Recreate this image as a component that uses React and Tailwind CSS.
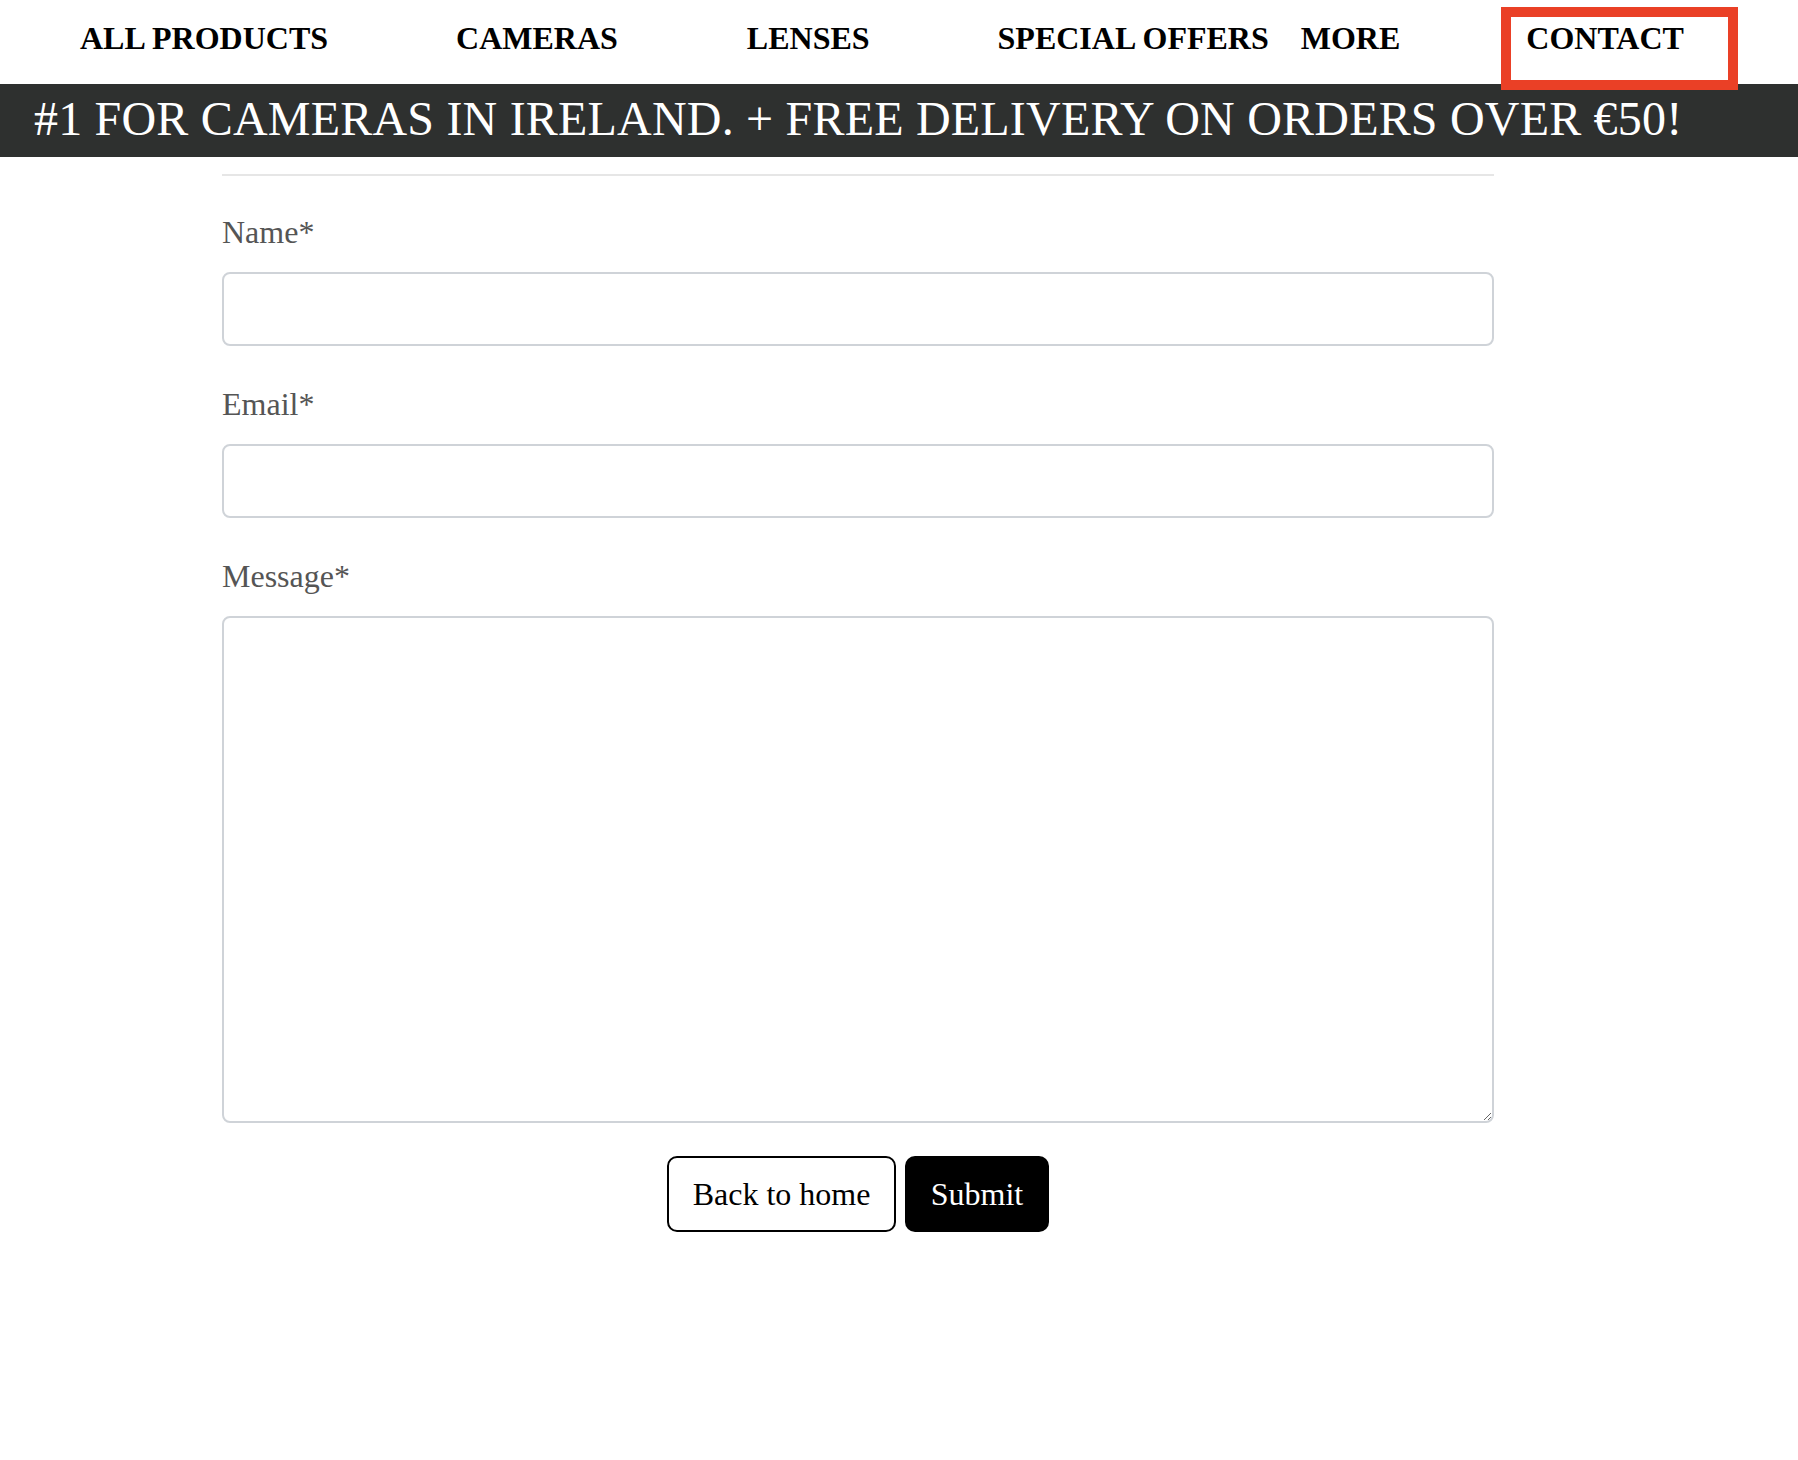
import React from 'react'

const navItems = [
  { label: 'ALL PRODUCTS', className: 'ml-[80px]' },
  { label: 'CAMERAS', className: 'ml-[128px]' },
  { label: 'LENSES', className: 'ml-[129px]' },
  { label: 'SPECIAL OFFERS', className: 'ml-[128px]' },
  { label: 'MORE', className: 'ml-[32px]' },
  { label: 'CONTACT', className: 'ml-[126px]' },
]

function Field({ label, children }) {
  return (
    <div className="flex flex-col">
      <label className="text-[32px] leading-[36px] text-[#555555] mb-[22px]">{label}</label>
      {children}
    </div>
  )
}

export default function App() {
  return (
    <div className="relative min-h-[1460px] bg-white font-['Liberation_Serif',serif]">
      {/* top nav */}
      <nav className="h-[84px] flex items-start pt-[20px]">
        {navItems.map((item) => (
          <a key={item.label} href="#" className={`${item.className} text-[32px] leading-[36px] font-bold text-black whitespace-nowrap`}>
            {item.label}
          </a>
        ))}
      </nav>
      {/* highlight box round the active link */}
      <div className="absolute left-[1501px] top-[7px] w-[237px] h-[83px] border-[10px] border-[#ea4026] z-10" />

      <div className="h-[73px] bg-[#2e302f] text-white text-[48px] leading-[53px] pt-[8px] pl-[34px] tracking-[0.2px] whitespace-nowrap">
        #1 FOR CAMERAS IN IRELAND. + FREE DELIVERY ON ORDERS OVER €50!
      </div>

      <form className="ml-[222px] w-[1272px] pt-[17px]" onSubmit={(e) => e.preventDefault()}>
        <div className="h-[2px] bg-[#e6e6e6] mb-[38px]" />
        <div className="flex flex-col gap-[40px]">
          <Field label="Name*">
            <input type="text" className="h-[74px] border-2 border-[#cfd3d8] rounded-[8px] px-4 text-[32px]" />
          </Field>
          <Field label="Email*">
            <input type="email" className="h-[74px] border-2 border-[#cfd3d8] rounded-[8px] px-4 text-[32px]" />
          </Field>
          <Field label="Message*">
            <textarea className="block h-[507px] border-2 border-[#cfd3d8] rounded-[8px] p-4 text-[32px] resize" />
          </Field>
        </div>
        <div className="flex justify-center gap-[9px] mt-[33px]">
          <button type="button" className="w-[229px] h-[76px] border-2 border-black rounded-[10px] bg-white text-black text-[32px]">
            Back to home
          </button>
          <button type="submit" className="w-[144px] h-[76px] rounded-[10px] bg-black text-white text-[32px]">
            Submit
          </button>
        </div>
      </form>
    </div>
  )
}
